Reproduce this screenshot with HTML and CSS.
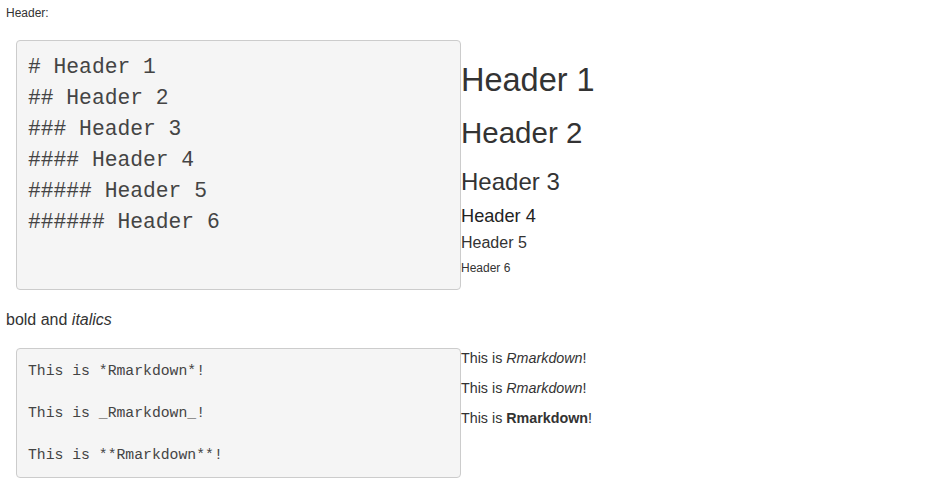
FILE: index.html
```html
<!DOCTYPE html>
<html>
<head>
<meta charset="utf-8">
<link rel="stylesheet" href="styles.css">
</head>
<body>
<div class="page">
  <div class="label">Header:</div>
  <div class="row row-headers">
    <div class="left">
<pre class="code code-lg"># Header 1
## Header 2
### Header 3
#### Header 4
##### Header 5
###### Header 6</pre>
    </div>
    <div class="right">
      <h1 class="h h1">Header 1</h1>
      <h2 class="h h2">Header 2</h2>
      <h3 class="h h3">Header 3</h3>
      <h4 class="h h4">Header 4</h4>
      <h5 class="h h5">Header 5</h5>
      <h6 class="h h6">Header 6</h6>
    </div>
  </div>
  <p class="label2">bold and <em>italics</em></p>
  <div class="row row-text">
    <div class="left">
<pre class="code code-sm">This is *Rmarkdown*!

This is _Rmarkdown_!

This is **Rmarkdown**!</pre>
    </div>
    <div class="right">
      <p class="para">This is <em>Rmarkdown</em>!</p>
      <p class="para">This is <em>Rmarkdown</em>!</p>
      <p class="para">This is <strong>Rmarkdown</strong>!</p>
    </div>
  </div>
</div>
</body>
</html>
```

FILE: styles.css
```css
html, body {
  margin: 0;
  padding: 0;
  background: #ffffff;
}

body {
  font-family: "Liberation Sans", Arial, sans-serif;
  color: #333333;
}

.page {
  padding: 5px 6px 0 6px;
}

.label {
  font-size: 12px;
  line-height: 16px;
  height: 16px;
  margin: 0 0 19px 0;
}

.row {
  display: flex;
  align-items: flex-start;
}

.left {
  width: 455px;
  flex: none;
}

.right {
  flex: 1;
}

.code {
  margin: 0 0 0 10px;
  background: #f5f5f5;
  border: 1px solid #cccccc;
  border-radius: 4px;
  font-family: "Liberation Mono", "Courier New", monospace;
  color: #444444;
  white-space: pre;
  overflow: hidden;
}

.code-lg {
  font-size: 21.3px;
  line-height: 31px;
  padding: 11px 10px 51px 11px;
}

.code-sm {
  font-size: 14.75px;
  line-height: 21px;
  padding: 11.5px 10px 11.5px 11px;
}

.h {
  font-weight: 400;
  color: #333333;
  margin: 0;
}

.h1 {
  font-size: 32.5px;
  line-height: 36px;
  margin-top: 22px;
}

.h2 {
  font-size: 29.5px;
  line-height: 34px;
  margin-top: 18px;
}

.h3 {
  font-size: 24px;
  line-height: 28px;
  margin-top: 18px;
}

.h4 {
  font-size: 18.2px;
  line-height: 22px;
  margin-top: 9px;
  color: #222222;
}

.h5 {
  font-size: 16px;
  line-height: 20px;
  margin-top: 6px;
}

.h6 {
  font-size: 12px;
  line-height: 16px;
  margin-top: 7px;
}

.label2 {
  font-size: 16px;
  line-height: 20px;
  margin: 19.5px 0 18.5px 0;
}

.para {
  font-size: 14.3px;
  line-height: 20px;
  margin: 0 0 10px 0;
}

.para strong {
  font-weight: 700;
}
```
